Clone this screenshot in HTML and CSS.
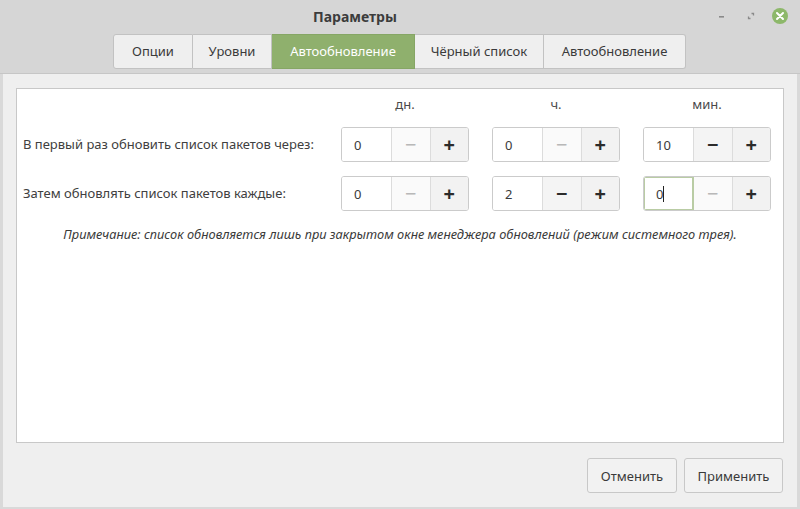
FILE: index.html
```html
<!DOCTYPE html>
<html lang="ru">
<head>
<meta charset="utf-8">
<title>Параметры</title>
<link rel="stylesheet" href="styles.css">
</head>
<body>
<div class="window">
  <header class="headerbar">
    <div class="titlerow">
      <div class="title">Параметры</div>
      <div class="controls">
        <span class="ctl ctl-min"><svg width="10" height="10" viewBox="0 0 10 10"><rect x="2" y="5" width="5" height="1.6" fill="#8a8a8a"/></svg></span>
        <span class="ctl ctl-max"><svg width="10" height="10" viewBox="0 0 10 10"><path d="M5.5 2.5 L7.5 2.5 L7.5 4.5 M4.5 7.5 L2.5 7.5 L2.5 5.5" stroke="#8a8a8a" stroke-width="1.3" fill="none"/></svg></span>
        <span class="ctl ctl-close"><svg width="18" height="18" viewBox="0 0 18 18"><circle cx="9" cy="9" r="8" fill="#8db86a"/><path d="M6 6 L12 12 M12 6 L6 12" stroke="#fff" stroke-width="2" stroke-linecap="round"/></svg></span>
      </div>
    </div>
    <nav class="tabs">
      <span class="tab t1">Опции</span>
      <span class="tab t2">Уровни</span>
      <span class="tab t3 active">Автообновление</span>
      <span class="tab t4">Чёрный список</span>
      <span class="tab t5">Автообновление</span>
    </nav>
  </header>
  <main class="content">
    <section class="panel">
      <div class="grid">
        <span></span>
        <span class="unit">дн.</span>
        <span class="unit">ч.</span>
        <span class="unit">мин.</span>

        <span class="label">В первый раз обновить список пакетов через:</span>
        <div class="spin"><span class="entry">0</span><span class="btn minus disabled">−</span><span class="btn plus">+</span></div>
        <div class="spin"><span class="entry">0</span><span class="btn minus disabled">−</span><span class="btn plus">+</span></div>
        <div class="spin"><span class="entry">10</span><span class="btn minus">−</span><span class="btn plus">+</span></div>

        <span class="label">Затем обновлять список пакетов каждые:</span>
        <div class="spin"><span class="entry">0</span><span class="btn minus disabled">−</span><span class="btn plus">+</span></div>
        <div class="spin"><span class="entry">2</span><span class="btn minus">−</span><span class="btn plus">+</span></div>
        <div class="spin focused"><span class="entry">0<span class="caret"></span></span><span class="btn minus disabled">−</span><span class="btn plus">+</span></div>
      </div>
      <p class="note">Примечание: список обновляется лишь при закрытом окне менеджера обновлений (режим системного трея).</p>
    </section>
    <footer class="actions">
      <button class="button b-cancel">Отменить</button>
      <button class="button b-apply">Применить</button>
    </footer>
  </main>
</div>
</body>
</html>
```
FILE: styles.css
```css
* { box-sizing: border-box; }
html, body { margin: 0; padding: 0; }
body {
  width: 800px;
  height: 509px;
  overflow: hidden;
  font-family: "Noto Sans", "Open Sans", sans-serif;
  font-size: 13px;
  color: #3a3a3a;
  background: #d9d9d9;
}
.window {
  width: 800px;
  height: 509px;
  display: flex;
  flex-direction: column;
}
.headerbar {
  height: 74px;
  background: #d6d6d6;
  border-bottom: 1px solid #c6c6c6;
}
.titlerow {
  height: 34px;
  display: flex;
  align-items: center;
  position: relative;
}
.title {
  flex: 1;
  text-align: center;
  padding-right: 90px;
  font-weight: bold;
  font-size: 14px;
  color: #3c3c3c;
  padding-bottom: 2px;
}
.controls {
  position: absolute;
  right: 11px;
  top: 7px;
  display: flex;
  align-items: center;
  gap: 11px;
}
.ctl { display: flex; align-items: center; justify-content: center; width: 18px; height: 18px; }
.tabs {
  display: flex;
  justify-content: center;
  padding-right: 1px;
}
.tab {
  height: 35px;
  display: flex;
  align-items: center;
  justify-content: center;
  background: #efefef;
  border: 1px solid #c2c2c2;
  border-left: none;
  color: #3a3a3a;
  font-size: 13px;
  padding-bottom: 1px;
}
.t1 { width: 80px; border-left: 1px solid #c2c2c2; border-radius: 3px 0 0 3px; }
.t2 { width: 79px; }
.t3 { width: 143px; }
.t4 { width: 129px; }
.t5 { width: 142px; border-radius: 0 3px 3px 0; }
.tab.active {
  background: #8fb06d;
  border-color: #86a665;
  color: #ffffff;
}
.content {
  flex: 1;
  background: #efefef;
  margin: 0 3px 2px;
  padding: 14px 13px 0 13px;
  display: flex;
  flex-direction: column;
}
.panel {
  height: 355px;
  background: #ffffff;
  border: 1px solid #c8c8c8;
  padding: 7px 12px 0 6px;
}
.grid {
  display: grid;
  grid-template-columns: 1fr 128px 128px 128px;
  column-gap: 23px;
  row-gap: 14px;
  align-items: center;
}
.unit {
  text-align: center;
  font-size: 13px;
  height: 17px;
  line-height: 17px;
  color: #4a4a4a;
}
.label { color: #404040; padding-bottom: 2px; }
.spin {
  display: flex;
  height: 35px;
  border: 1px solid #cbcbcb;
  border-radius: 3px;
  overflow: hidden;
  background: #ffffff;
}
.entry {
  width: 50px;
  display: flex;
  align-items: center;
  padding-left: 12px;
  background: #fff;
  color: #3a3a3a;
  border-right: 1px solid #dcdcdc;
}
.spin.focused .entry {
  box-shadow: inset 0 0 0 1px #b9cca4;
  border-right-color: #b9cca4;
}
.caret {
  display: inline-block;
  width: 1px;
  height: 16px;
  background: #222;
  margin-left: 0;
}
.btn {
  flex: 1;
  display: flex;
  align-items: center;
  justify-content: center;
  font-size: 20px;
  font-weight: bold;
  color: #2b2b2b;
  background: #f2f2f2;
}
.minus { border-right: 1px solid #dcdcdc; background: #f4f4f4; }
.minus.disabled { color: #b8b8b8; background: #fafafa; font-weight: normal; }
.note {
  margin: 14px 0 0;
  text-align: center;
  font-style: italic;
  font-size: 12.8px;
  color: #3a3a3a;
  padding-left: 6px;
}
.actions {
  display: flex;
  justify-content: flex-end;
  gap: 7px;
  padding-top: 15px;
  padding-right: 1px;
}
.button {
  height: 35px;
  font-family: "Noto Sans", "Open Sans", sans-serif;
  font-size: 13px;
  color: #3a3a3a;
  background: #f2f2f2;
  border: 1px solid #c8c8c8;
  border-radius: 3px;
  padding: 0 10px;
}
.b-cancel { width: 90px; }
.b-apply { width: 99px; }
```
